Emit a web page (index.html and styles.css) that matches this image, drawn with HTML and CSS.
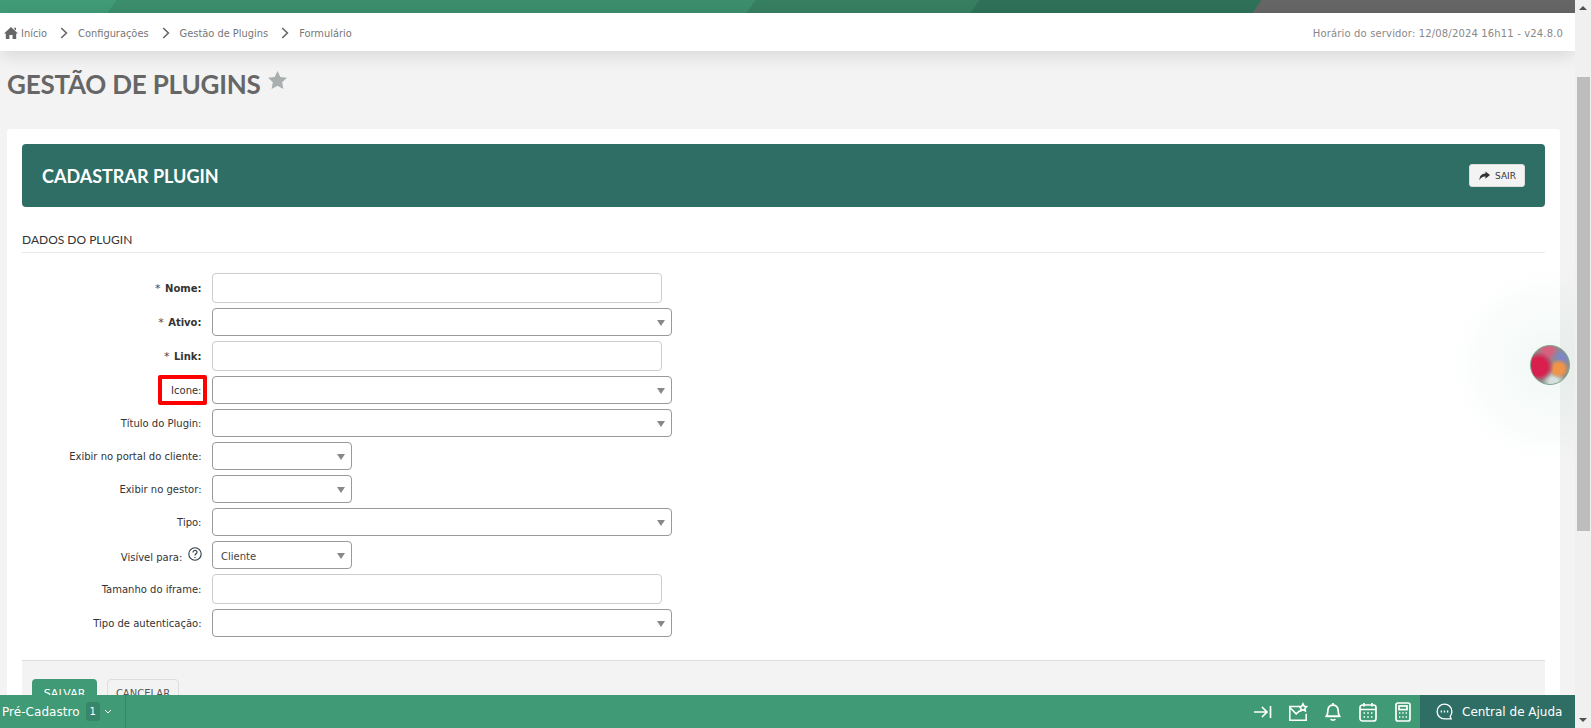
FILE: index.html
```html
<!DOCTYPE html>
<html lang="pt-BR">
<head>
    <meta charset="UTF-8">
    <meta name="viewport" content="width=device-width, initial-scale=1.0">
    <title>Gestão de Plugins</title>
    <link rel="stylesheet" href="styles.css">
</head>
<body>

<div class="app">
    <div class="main">

        <!-- Faixa colorida do topo -->
        <div class="top-strip">
            <span class="seg seg-1"></span>
            <span class="seg seg-2"></span>
            <span class="seg seg-3"></span>
            <span class="seg seg-4"></span>
            <span class="seg seg-5"></span>
            <span class="seg seg-6"></span>
        </div>

        <!-- Breadcrumb -->
        <div class="crumb-bar">
            <div class="crumbs">
                <svg class="home-icon" viewBox="0 0 14 12"><path d="M7 0 L14 6.4 L12.2 6.4 L12.2 12 L8.6 12 L8.6 8 L5.4 8 L5.4 12 L1.8 12 L1.8 6.4 L0 6.4 Z M10.2 .8 L12 .8 L12 3.6 L10.2 2 Z"/></svg>
                <a class="crumb crumb-first">Início</a>
                <svg class="crumb-sep" viewBox="0 0 8 12"><path d="M1.2 1 L6.4 6 L1.2 11"/></svg>
                <a class="crumb">Configurações</a>
                <svg class="crumb-sep" viewBox="0 0 8 12"><path d="M1.2 1 L6.4 6 L1.2 11"/></svg>
                <a class="crumb">Gestão de Plugins</a>
                <svg class="crumb-sep" viewBox="0 0 8 12"><path d="M1.2 1 L6.4 6 L1.2 11"/></svg>
                <a class="crumb">Formulário</a>
            </div>
            <div class="server-time">Horário do servidor: 12/08/2024 16h11 - v24.8.0</div>
        </div>

        <!-- Titulo da pagina -->
        <div class="page-title">
            <h1>GESTÃO DE PLUGINS</h1>
            <svg class="star-icon" viewBox="0 0 20 19"><path d="M10 0 L13 6.3 L20 7.2 L14.9 12 L16.2 19 L10 15.6 L3.8 19 L5.1 12 L0 7.2 L7 6.3 Z"/></svg>
        </div>

        <div class="card">
            <div class="card-head">
                <h2>CADASTRAR PLUGIN</h2>
                <button type="button" class="btn-exit">
                    <svg viewBox="0 0 12 10"><path d="M7 0 L12 4 L7 8 L7 5.6 C4 5.4 2 6.6 .6 9.6 C.4 5.4 2.6 2.6 7 2.4 Z"/></svg>
                    SAIR
                </button>
            </div>

            <div class="section-title">DADOS DO PLUGIN</div>

            <form class="plugin-form" action="#" method="post">
                <div class="row">
                    <label class="required"><em>*</em> Nome:</label>
                    <input type="text" class="field-text">
                </div>
                <div class="row">
                    <label class="required"><em>*</em> Ativo:</label>
                    <div class="select-wrap"><select></select></div>
                </div>
                <div class="row">
                    <label class="required"><em>*</em> Link:</label>
                    <input type="text" class="field-text">
                </div>
                <div class="row">
                    <label class="marked">Icone:</label>
                    <div class="select-wrap"><select></select></div>
                </div>
                <div class="row">
                    <label>Título do Plugin:</label>
                    <div class="select-wrap"><select></select></div>
                </div>
                <div class="row">
                    <label>Exibir no portal do cliente:</label>
                    <div class="select-wrap small"><select></select></div>
                </div>
                <div class="row">
                    <label>Exibir no gestor:</label>
                    <div class="select-wrap small"><select></select></div>
                </div>
                <div class="row">
                    <label>Tipo:</label>
                    <div class="select-wrap"><select></select></div>
                </div>
                <div class="row">
                    <label>Visível para:
                        <svg class="help-icon" viewBox="0 0 14 14"><circle cx="7" cy="7" r="6.2"/><path d="M5 5.4 C5 2.8 9 2.8 9 5.2 C9 6.8 7 6.8 7 8.6"/><path d="M7 10 L7 11"/></svg>
                    </label>
                    <div class="select-wrap small"><select><option>Cliente</option></select></div>
                </div>
                <div class="row">
                    <label>Tamanho do iframe:</label>
                    <input type="text" class="field-text">
                </div>
                <div class="row">
                    <label>Tipo de autenticação:</label>
                    <div class="select-wrap"><select></select></div>
                </div>

                <div class="form-actions">
                    <button type="submit" class="btn-save">SALVAR</button>
                    <button type="button" class="btn-cancel">CANCELAR</button>
                </div>
            </form>
        </div>

        <!-- Barra inferior fixa -->
        <div class="bottom-bar">
            <div class="queue">
                <span class="queue-name">Pré-Cadastro</span>
                <span class="queue-count">1</span>
                <svg class="queue-arrow" viewBox="0 0 8 5"><path d="M1 1 L4 4 L7 1"/></svg>
            </div>
            <div class="tools">
                <svg class="tool" viewBox="0 0 20 20"><path d="M2 10 H15 M10 5 L15 10 L10 15 M18.5 4 V16"/></svg>
                <svg class="tool tool-mail" viewBox="0 0 22 20"><path d="M12 4 H2 V19 H20 V12 M2 5 L9 12 L13 8.5"/><path d="M16.5 1 L17.8 3.6 L20.6 4 L18.6 6 L19.1 8.8 L16.5 7.5 L13.9 8.8 L14.4 6 L12.4 4 L15.2 3.6 Z"/></svg>
                <svg class="tool tool-bell" viewBox="0 0 20 20"><path d="M3.5 14 C5 12 4.6 10 4.9 8 C5.3 5 7.3 3.2 10 3.2 C12.7 3.2 14.7 5 15.1 8 C15.4 10 15 12 16.5 14 Z M2.5 14.5 H17.5 M10 1 V3 M7.8 17 C8.4 18.6 11.6 18.6 12.2 17"/></svg>
                <svg class="tool tool-cal" viewBox="0 0 20 20"><rect x="2" y="3" width="16" height="16" rx="2.5"/><path d="M2 7.5 H18 M6 1 V4.5 M14 1 V4.5 M5.5 11 H7 M9.2 11 H10.8 M13 11 H14.5 M5.5 15 H7 M9.2 15 H10.8 M13 15 H14.5"/></svg>
                <svg class="tool tool-calc" viewBox="0 0 18 20"><rect x="2" y="1" width="14" height="18" rx="2"/><rect x="5" y="4" width="8" height="3.6"/><path d="M5 11 H6.4 M8.3 11 H9.7 M11.6 11 H13 M5 15 H6.4 M8.3 15 H9.7 M11.6 15 H13"/></svg>
            </div>
            <div class="help-center">
                <svg class="chat-icon" viewBox="0 0 18 18"><path d="M9 1.2 C4.6 1.2 1.2 4.6 1.2 9 C1.2 13.4 4.6 16.8 9 16.8 L16 16.8 L15 14.2 C16.2 12.8 16.8 11 16.8 9 C16.8 4.6 13.4 1.2 9 1.2 Z"/><path class="chat-dots" d="M5 9 H6.4 M8.3 9 H9.7 M11.6 9 H13"/></svg>
                Central de Ajuda
            </div>
        </div>

        <!-- Bolha do assistente -->
        <div class="bubble-glow"></div>
        <div class="bubble"></div>
    </div>

    <!-- Barra de rolagem -->
    <div class="scrollbar">
        <span class="arrow-up"></span>
        <span class="thumb"></span>
        <span class="arrow-down"></span>
    </div>
</div>

</body>
</html>
```

FILE: styles.css
```css
html, body {
    margin: 0;
    padding: 0;
    height: 100%;
    overflow: hidden;
}

body {
    font-family: 'DejaVu Sans', Verdana, sans-serif;
    font-size: 10px;
    color: #333;
    background-color: #f3f3f3;
}

.app {
    display: flex;
    height: 728px;
}

.main {
    position: relative;
    flex: 1;
    min-width: 0;
    overflow: hidden;
}

/* faixa do topo */
.top-strip {
    display: flex;
    height: 13px;
    overflow: hidden;
}

.seg {
    display: block;
    height: 13px;
    flex: none;
    margin-right: -1px;
    transform: skewX(-35deg);
}

.seg-1 { width: 133px; margin-left: -20px; background-color: #419b77; }
.seg-2 { width: 640px; background-color: #3c8e6d; }
.seg-3 { width: 225px; background-color: #377f62; }
.seg-4 { width: 283px; background-color: #2f7259; }
.seg-5 { width: 222px; background-color: #666; border-right: 1px solid #777; }
.seg-6 { width: 120px; background-color: #666; }

/* breadcrumb */
.crumb-bar {
    position: relative;
    display: flex;
    justify-content: space-between;
    align-items: center;
    box-sizing: border-box;
    height: 38px;
    padding: 2px 12px 0 4px;
    background-color: #fff;
    box-shadow: 0 4px 18px rgba(0, 0, 0, 0.12);
}

.crumbs {
    display: flex;
    align-items: center;
    font-size: 9.85px;
    color: #777;
}

.home-icon {
    width: 14px;
    height: 12px;
    fill: #666;
    margin-right: 3px;
}

.crumb-sep {
    width: 8px;
    height: 12px;
    margin: 0 10px 0 13px;
    fill: none;
    stroke: #666;
    stroke-width: 1.6;
}

.server-time {
    color: #888;
    letter-spacing: 0.15px;
}

/* titulo */
.page-title {
    display: flex;
    align-items: flex-start;
    height: 78px;
    padding-left: 7px;
}

.page-title h1 {
    margin: 16px 0 0;
    font-family: Lato, sans-serif;
    font-size: 26px;
    line-height: 34px;
    font-weight: 700;
    letter-spacing: -0.2px;
    color: #666;
}

.star-icon {
    width: 19px;
    height: 18px;
    margin: 20px 0 0 7px;
    fill: #a9afae;
}

/* card */
.card {
    margin: 0 15px 0 7px;
    padding: 15px;
    background-color: #fff;
    border-radius: 3px;
}

.card-head {
    display: flex;
    justify-content: space-between;
    align-items: center;
    height: 63px;
    padding: 0 20px;
    background-color: #2f6e65;
    border-radius: 4px;
}

.card-head h2 {
    margin: 0;
    font-family: Lato, sans-serif;
    font-size: 18px;
    font-weight: 700;
    color: #fff;
}

.btn-exit {
    display: flex;
    align-items: center;
    gap: 5px;
    width: 56px;
    height: 23px;
    padding: 0 0 0 9px;
    background-color: #f3f3f3;
    border: 1px solid #ddd;
    border-radius: 3px;
    font-family: inherit;
    font-size: 9px;
    color: #333;
}

.btn-exit svg {
    width: 11px;
    height: 10px;
    fill: #333;
}

.section-title {
    height: 46px;
    box-sizing: border-box;
    padding-top: 25px;
    border-bottom: 1px solid #e8e8e8;
    font-family: Lato, sans-serif;
    font-size: 12px;
    line-height: 15px;
    color: #333;
}

/* formulario */
.plugin-form {
    display: flex;
    flex-direction: column;
    gap: 5px;
    padding-top: 20px;
}

.row {
    display: flex;
    align-items: center;
}

.row label {
    position: relative;
    width: 179.5px;
    margin-right: 10.5px;
    text-align: right;
    flex: none;
}

.required {
    font-weight: 700;
}

.required em {
    font-style: normal;
    font-weight: 400;
    font-size: 11px;
    margin-right: 1px;
    color: #4a3f4c;
}

.marked::after {
    content: "";
    position: absolute;
    right: -5px;
    top: -10px;
    width: 41px;
    height: 22px;
    border: 4px solid #f00;
    border-radius: 2px;
}

.help-icon {
    width: 14px;
    height: 14px;
    margin-left: 2px;
    vertical-align: 0;
    fill: none;
    stroke: #2b3a44;
    stroke-width: 1.1;
}

.field-text {
    box-sizing: border-box;
    width: 450px;
    height: 30px;
    padding: 0 8px;
    background-color: #fff;
    border: 1px solid #ccc;
    border-radius: 4px;
    font-family: inherit;
    font-size: 10px;
}

.select-wrap {
    position: relative;
    width: 460px;
    height: 28px;
}

.select-wrap.small {
    width: 140px;
}

.select-wrap::after {
    content: "";
    position: absolute;
    right: 7px;
    top: 12px;
    border-left: 4px solid transparent;
    border-right: 4px solid transparent;
    border-top: 6px solid #888;
}

.select-wrap select {
    appearance: none;
    box-sizing: border-box;
    width: 100%;
    height: 28px;
    padding: 2px 8px 0;
    background-color: #fff;
    border: 1px solid #999;
    border-radius: 4px;
    font-family: inherit;
    font-size: 10px;
    color: #444;
}

.form-actions {
    display: flex;
    gap: 10px;
    margin-top: 18px;
    padding: 18px 10px;
    background-color: #f3f3f3;
    border-top: 1px solid #ddd;
}

.btn-save, .btn-cancel {
    height: 28px;
    padding: 0;
    border-radius: 4px;
    font-family: inherit;
    font-size: 10px;
}

.btn-save {
    width: 65px;
    background-color: #3f9a75;
    border: none;
    font-size: 11px;
    color: #fff;
}

.btn-cancel {
    width: 72px;
    background-color: #f3f3f3;
    border: 1px solid #ddd;
    color: #555;
}

/* barra inferior */
.bottom-bar {
    position: absolute;
    left: 0;
    right: 0;
    bottom: 0;
    display: flex;
    align-items: stretch;
    height: 33px;
    background-color: #3f9a75;
    color: #fff;
}

.queue {
    display: flex;
    align-items: center;
    width: 126px;
    box-sizing: border-box;
    padding-left: 2px;
    border-right: 1px solid #37866a;
}

.queue-name {
    font-size: 12px;
    letter-spacing: 0.05px;
}

.queue-count {
    width: 14px;
    height: 19px;
    margin-left: 6px;
    background-color: #37866a;
    border-radius: 3px;
    font-size: 10px;
    line-height: 19px;
    text-align: center;
}

.queue-arrow {
    width: 8px;
    height: 5px;
    margin-left: 4px;
    fill: none;
    stroke: #fff;
    stroke-width: 1;
}

.tools {
    display: flex;
    flex: 1;
    justify-content: flex-end;
    align-items: center;
    gap: 15px;
    padding-right: 7px;
}

.tool {
    width: 20px;
    height: 20px;
    fill: none;
    stroke: #fff;
    stroke-width: 1.7;
}

.tools .tool:first-child {
    margin-right: 1px;
}

.help-center {
    display: flex;
    align-items: center;
    gap: 9px;
    width: 155px;
    box-sizing: border-box;
    padding-left: 16px;
    background-color: #2f6e65;
    font-size: 12px;
}

.chat-icon {
    width: 17px;
    height: 17px;
    fill: none;
    stroke: #fff;
    stroke-width: 1.4;
}

.chat-dots {
    stroke-width: 2;
}

/* bolha */
.bubble-glow {
    position: absolute;
    left: 1450px;
    top: 265px;
    width: 200px;
    height: 200px;
    background: radial-gradient(circle, rgba(64, 154, 117, 0.07) 0, rgba(64, 154, 117, 0.025) 50%, rgba(64, 154, 117, 0) 70%);
}

.bubble {
    position: absolute;
    left: 1530px;
    top: 345px;
    width: 38px;
    height: 38px;
    border: 1px solid #7fa98b;
    border-radius: 50%;
    background:
        radial-gradient(circle 15px at 20% 54%, #d81f4e 58%, rgba(216, 31, 78, 0) 100%),
        radial-gradient(circle 10px at 73% 60%, #f0944a 50%, rgba(240, 148, 74, 0) 100%),
        radial-gradient(circle 10px at 80% 30%, #7d86c9 20%, rgba(125, 134, 201, 0) 100%),
        radial-gradient(circle 11px at 45% 12%, #d8607f 35%, rgba(216, 96, 127, 0) 100%),
        radial-gradient(circle 12px at 60% 95%, #d3e2de 35%, rgba(211, 226, 222, 0) 100%),
        #8f8a8a;
}

/* scrollbar */
.scrollbar {
    position: relative;
    flex: none;
    width: 16px;
    background-color: #f0f0f0;
}

.thumb {
    position: absolute;
    left: 2px;
    top: 77px;
    width: 13px;
    height: 454px;
    background-color: #bdbdbd;
}

.arrow-up, .arrow-down {
    position: absolute;
    left: 4px;
    border-left: 4px solid transparent;
    border-right: 4px solid transparent;
}

.arrow-up {
    top: 6px;
    border-bottom: 4px solid #505050;
}

.arrow-down {
    bottom: 6px;
    border-top: 4px solid #505050;
}
```
